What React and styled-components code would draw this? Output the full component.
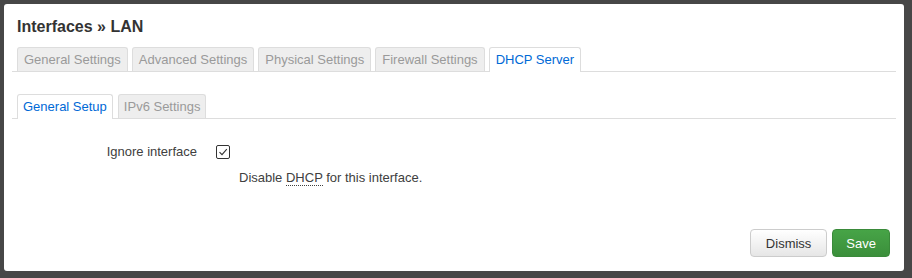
import styled, { createGlobalStyle, css } from "styled-components"

const GlobalStyle = createGlobalStyle`
  html, body {
    margin: 0;
    padding: 0;
    background: #474747;
  }

  body {
    font-family: "Liberation Sans", Arial, sans-serif;
    font-size: 13px;
    color: #404040;
  }
`

const Modal = styled.div`
  box-sizing: border-box;
  display: flex;
  flex-direction: column;
  width: 900px;
  height: 267px;
  margin: 4px;
  padding: 0 8px 14px;
  background: #fff;
  border-radius: 3px;
`

const Title = styled.h4`
  margin: 13px 0 10px;
  padding-left: 5px;
  font-size: 16px;
  line-height: 20px;
  font-weight: bold;
  color: #333;
`

const TabBar = styled.ul`
  display: flex;
  gap: ${p => (p.$sub ? "5px" : "4px")};
  margin: ${p => (p.$sub ? "22px 0 0" : "0")};
  padding: 0 0 0 5px;
  list-style: none;
  border-bottom: 1px solid #ddd;
`

const Tab = styled.li`
  box-sizing: border-box;
  height: 24px;
  padding: 0 ${p => (p.$sub ? "5px" : "6px")};
  line-height: 23px;
  border: 1px solid #ddd;
  border-bottom: none;
  border-radius: 3px 3px 0 0;
  background: #eee;
  color: #9a9a9a;
  white-space: nowrap;

  ${p =>
    p.$active &&
    css`
      height: 25px;
      margin-bottom: -1px;
      background: #fff;
      color: #0069d6;
    `}
`

const Form = styled.div`
  display: grid;
  grid-template-columns: 185px auto;
  column-gap: 19px;
  row-gap: 10px;
  padding-top: 26px;
`

const Label = styled.label`
  text-align: right;
  line-height: 14px;
  color: #404040;
`

const CheckBox = styled.span`
  box-sizing: border-box;
  display: flex;
  align-items: center;
  justify-content: center;
  width: 14px;
  height: 14px;
  border: 1px solid #333;
  border-radius: 2px;
  background: #fff;
`

const Description = styled.div`
  grid-column: 2;
  padding-left: 23px;
  line-height: 18px;
  color: #404040;
`

const Abbr = styled.abbr`
  text-decoration: none;
  border-bottom: 1px dotted #404040;
`

const Footer = styled.div`
  display: flex;
  justify-content: flex-end;
  gap: 5px;
  margin-top: auto;
  padding-right: 6px;
`

const Button = styled.button`
  box-sizing: border-box;
  height: 28px;
  padding: 0 15px;
  font-family: "Liberation Sans", Arial, sans-serif;
  font-size: 13px;
  border-radius: 4px;
  border: 1px solid #ccc;
  background: linear-gradient(#fff, #e6e6e6);
  color: #333;

  ${p =>
    p.$primary &&
    css`
      padding: 0 13px;
      border-color: #3a8a3a;
      background: linear-gradient(#47a447, #3b8f3b);
      color: #fff;
    `}
`

const mainTabs = ["General Settings", "Advanced Settings", "Physical Settings", "Firewall Settings", "DHCP Server"]
const subTabs = ["General Setup", "IPv6 Settings"]

const App = () => {
  return (
    <>
      <GlobalStyle />
      <Modal>
        <Title>Interfaces » LAN</Title>

        <TabBar>
          {mainTabs.map(t => (
            <Tab key={t} $active={t === "DHCP Server"}>
              {t}
            </Tab>
          ))}
        </TabBar>

        <TabBar $sub>
          {subTabs.map(t => (
            <Tab key={t} $sub $active={t === "General Setup"}>
              {t}
            </Tab>
          ))}
        </TabBar>

        <Form>
          <Label>Ignore interface</Label>
          <CheckBox>
            <svg width="10" height="10" viewBox="0 0 10 10">
              <path d="M1.5 5.2 L4 7.6 L8.8 2.2" fill="none" stroke="#333" strokeWidth="1.1" />
            </svg>
          </CheckBox>
          <Description>
            Disable <Abbr title="Dynamic Host Configuration Protocol">DHCP</Abbr> for this interface.
          </Description>
        </Form>

        <Footer>
          <Button>Dismiss</Button>
          <Button $primary>Save</Button>
        </Footer>
      </Modal>
    </>
  )
}

export default App
